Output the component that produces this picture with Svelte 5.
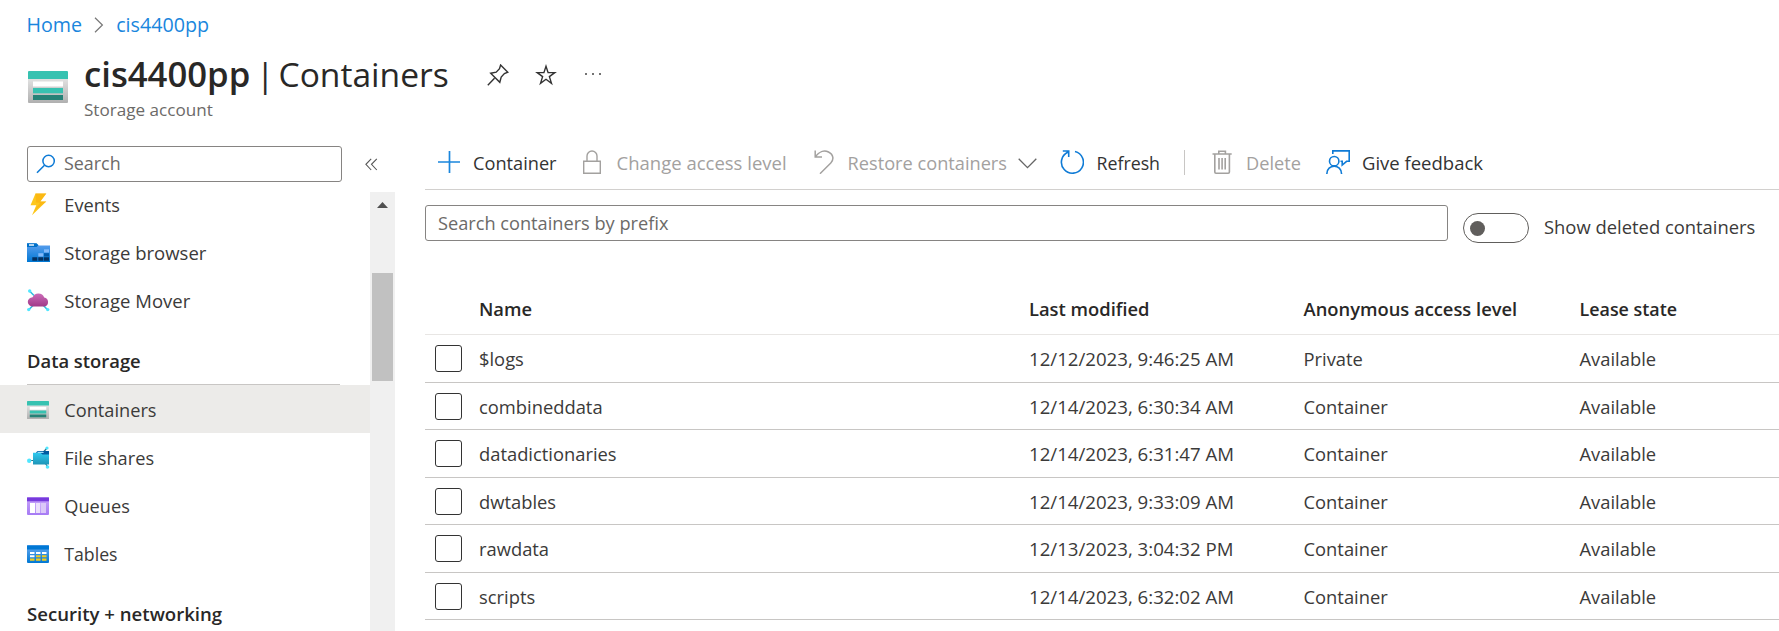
<script>
  const rows = [
    ['$logs', '12/12/2023, 9:46:25 AM', 'Private', 'Available'],
    ['combineddata', '12/14/2023, 6:30:34 AM', 'Container', 'Available'],
    ['datadictionaries', '12/14/2023, 6:31:47 AM', 'Container', 'Available'],
    ['dwtables', '12/14/2023, 9:33:09 AM', 'Container', 'Available'],
    ['rawdata', '12/13/2023, 3:04:32 PM', 'Container', 'Available'],
    ['scripts', '12/14/2023, 6:32:02 AM', 'Container', 'Available']
  ];
  const topItems = ['Events', 'Storage browser', 'Storage Mover'];
  const dataItems = ['Containers', 'File shares', 'Queues', 'Tables'];
</script>

{#snippet storageIcon(w, h)}
  <svg width={w} height={h} viewBox="0 0 40 32" preserveAspectRatio="none">
    <rect y="7" width="40" height="25" rx="1" fill="url(#grey)" />
    <path d="M1 0h38a1 1 0 0 1 1 1v7H0V1a1 1 0 0 1 1-1z" fill="#37c2b1" />
    <rect x="5" y="10.5" width="30" height="5" fill="#fff" />
    <rect x="5" y="17" width="30" height="5.3" fill="#37c2b1" />
    <rect x="5" y="24" width="30" height="5" fill="#258277" />
  </svg>
{/snippet}

{#snippet navIcon(name)}
  {#if name === 'Events'}
    <svg width="23" height="23" viewBox="0 0 23 23">
      <path d="M8.5 .5H19.3L13.3 8.5H19.3L5 22.3L9.3 12.2H3.5z" fill="#fdc71c" />
      <path d="M8.5 .5H19.3L13.3 8.5H19.3L7 18L13 9.8L9 9.5z" fill="#fab010" opacity=".65" />
    </svg>
  {:else if name === 'Storage browser'}
    <svg width="23" height="23" viewBox="0 0 23 23">
      <path d="M0 2.5H9.5L11 4.5H23V21H0z" fill="url(#folder)" />
      <path d="M0 2.3H9.5L11.6 4.2L9.5 6H0z" fill="#0070c8" />
      <rect x="2" y="3.3" width="5" height="1.4" fill="#fff" />
      <rect x="17" y="8.3" width="5" height="3.2" fill="#83b9f9" />
      <rect x="11.3" y="12.2" width="5" height="3.3" fill="#83b9f9" />
      <rect x="17" y="12.2" width="5" height="3.3" fill="#0058a8" />
      <path d="M5.3 16.3h5v3.5h-5zM11.3 16.3h5v3.5h-5zM17 16.3h5v3.5h-5z" fill="#04305f" />
    </svg>
  {:else if name === 'Storage Mover'}
    <svg width="23" height="23" viewBox="0 0 23 23">
      <path d="M2.5 2L7 6.5M1.7 20.8L6 16.5M20.5 20.8L16.5 16.5" stroke="#32bedd" stroke-width="1.6" />
      <circle cx="2.7" cy="2" r="1.7" fill="#50e6ff" />
      <circle cx="1.7" cy="20.6" r="1.7" fill="#50e6ff" />
      <circle cx="20.7" cy="20.6" r="1.7" fill="#50e6ff" />
      <path d="M6 17.6A5 4.7 0 0 1 5.6 8.2A6.2 6 0 0 1 17.2 8.4A4.7 4.7 0 0 1 17.4 17.6z" fill="url(#cloud)" />
    </svg>
  {:else if name === 'Containers'}
    {@render storageIcon(22, 18)}
  {:else if name === 'File shares'}
    <svg width="23" height="23" viewBox="0 0 23 23">
      <path d="M2.5 14.5H7M16.5 6L20 2M18 17L20.5 20.5" stroke="#2a7186" stroke-width="1.2" />
      <path d="M9 6.5L10.5 5H22V9H9z" fill="#005ba1" />
      <path d="M6 6.8H13.5L15.5 8.5H22V18.5H6z" fill="url(#share)" />
      <path d="M10 5.8h6l1 1.2h-6z" fill="#9fdcf5" />
      <circle cx="2.2" cy="14.7" r="2.2" fill="#50e6ff" />
      <circle cx="20" cy="2" r="1.6" fill="#50e6ff" />
      <circle cx="20.5" cy="21" r="1.8" fill="#50e6ff" />
    </svg>
  {:else if name === 'Queues'}
    <svg width="22" height="18" viewBox="0 0 22 18">
      <rect width="22" height="18" rx="1" fill="url(#queue)" />
      <rect y=".5" width="22" height="3.8" fill="#773adc" />
      <rect x="3" y="6" width="5" height="10" fill="#fff" />
      <rect x="8.8" y="6" width="4.5" height="10" fill="#ece0fc" />
      <rect x="14" y="6" width="5" height="10" fill="#dbc8f8" />
    </svg>
  {:else}
    <svg width="22" height="18" viewBox="0 0 22 18">
      <rect width="22" height="18" rx="1" fill="url(#tbl)" />
      <rect y=".5" width="22" height="4" fill="#0078d4" />
      <path d="M3 7h4.5v2H3zM9 7h4.5v2H9zM15 7h4.5v2H15zM3 10.2h4.5v2H3z" fill="#fff" />
      <path d="M9 10.2h4.5v2H9zM15 10.2h4.5v2H15zM3 13.4h4.5v2.4H3zM9 13.4h4.5v2.4H9zM15 13.4h4.5v2.4H15z" fill="#f2cb1d" />
    </svg>
  {/if}
{/snippet}

<svg class="defs" width="0" height="0">
  <defs>
    <linearGradient id="grey" x2="0" y2="1"><stop stop-color="#e3e3e3" /><stop offset="1" stop-color="#b0b0b0" /></linearGradient>
    <linearGradient id="folder" x2="0" y2="1"><stop stop-color="#5ea0ef" /><stop offset="1" stop-color="#0078d4" /></linearGradient>
    <linearGradient id="cloud" x2="0" y2="1"><stop stop-color="#cc6bb8" /><stop offset="1" stop-color="#a03a88" /></linearGradient>
    <linearGradient id="share" x2="0" y2="1"><stop stop-color="#2fc9ef" /><stop offset="1" stop-color="#1e95b8" /></linearGradient>
    <linearGradient id="queue" x2="0" y2="1"><stop stop-color="#c9a8fa" /><stop offset="1" stop-color="#a67af4" /></linearGradient>
    <linearGradient id="tbl" x2="0" y2="1"><stop stop-color="#6aa9f0" /><stop offset="1" stop-color="#0078d4" /></linearGradient>
  </defs>
</svg>

<div class="page">
  <nav class="crumbs">
    <a href="#home">Home</a>
    <svg width="10" height="16" viewBox="0 0 10 16"><path d="M1 .8L8.4 8L1 15.2" fill="none" stroke="#777" stroke-width="1.2" /></svg>
    <a href="#account">cis4400pp</a>
  </nav>

  <header>
    <span class="logo">{@render storageIcon(40, 32)}</span>
    <div class="titles">
      <div class="title-line">
        <h1><b>cis4400pp</b><span class="bar">|</span><span class="blade">Containers</span></h1>
        <svg class="pin" width="22" height="22" viewBox="0 0 22 22" fill="none" stroke="#333" stroke-width="1.4"><path d="M.8 21.2L7.5 14.3M13.6 1L20.8 8.2L17.4 9.6L14.2 13L12.8 18.3L3.7 9.2L9.2 8.2L12.5 4.6z" /></svg>
        <svg class="star" width="22" height="22" viewBox="0 0 22 22" fill="none" stroke="#333" stroke-width="1.4"><path d="M11 2.2L13.1 8.6H19.8L14.4 12.6L16.5 19.4L11 15.3L5.5 19.4L7.6 12.6L2.2 8.6H8.9z" /></svg>
        <svg class="more" width="18" height="4" viewBox="0 0 18 4" fill="#444"><circle cx="2" cy="2" r="1" /><circle cx="9" cy="2" r="1" /><circle cx="16" cy="2" r="1" /></svg>
      </div>
      <div class="subtitle">Storage account</div>
    </div>
  </header>

  <div class="body">
    <aside>
      <div class="search-row">
        <div class="search">
          <svg width="20" height="20" viewBox="0 0 20 20" fill="none" stroke="#0f7bd6" stroke-width="1.5"><circle cx="12.6" cy="7" r="5.7" /><path d="M8.5 11.2L1 18.8" /></svg>
          <span>Search</span>
        </div>
        <svg width="13" height="13" viewBox="0 0 13 13" fill="none" stroke="#555" stroke-width="1.1"><path d="M6.2 .8L.9 6.3L6.2 12M11.8 .8L6.5 6.3L11.8 12" /></svg>
      </div>
      <div class="side">
        <div class="menu">
          {#each topItems as item}
            <div class="item" class:long={item.length > 8}><span class="ico">{@render navIcon(item)}</span><span class="label">{item}</span></div>
          {/each}
          <div class="group"><span>Data storage</span></div>
          {#each dataItems as item}
            <div class="item" class:selected={item === 'Containers'} class:tight={item === 'Tables'}><span class="ico">{@render navIcon(item)}</span><span class="label">{item}</span></div>
          {/each}
          <div class="group last"><span>Security + networking</span></div>
        </div>
        <div class="scroll">
          <svg width="11" height="6" viewBox="0 0 11 6"><path d="M5.5 0L11 6H0z" fill="#505050" /></svg>
          <div class="thumb"></div>
        </div>
      </div>
    </aside>

    <main>
      <div class="toolbar">
        <div class="cmd">
          <svg width="24" height="24" viewBox="0 0 24 24"><path d="M12.5 1v22M1 12h22" stroke="#1a86dd" stroke-width="1.7" /></svg>
          <span>Container</span>
        </div>
        <div class="cmd off access">
          <svg width="24" height="24" viewBox="0 0 24 24" fill="none" stroke="#a3a19f" stroke-width="1.4"><path d="M2.7 11.2H19.3V23.2H2.7zM6 11V6a5 5 0 0 1 10 0V11" /></svg>
          <span class="wide">Change access level</span>
        </div>
        <div class="cmd off">
          <svg width="24" height="24" viewBox="0 0 24 24" fill="none" stroke="#a3a19f" stroke-width="1.5"><path d="M3.2 .5V7H10M3.5 6.5C7 1.8 12 -.2 16.5 2C22 4.8 21.8 10 18.8 13L8 23.7" /></svg>
          <span>Restore containers</span>
          <svg class="chev" width="19" height="11" viewBox="0 0 19 11" fill="none" stroke="#666" stroke-width="1.3"><path d="M.7 .8L9.5 9.7L18.3 .8" /></svg>
        </div>
        <div class="cmd refresh">
          <svg width="24" height="24" viewBox="0 0 24 24" fill="none" stroke="#0f7bd6" stroke-width="1.6"><path d="M15 1.5A11 11 0 1 1 7.8 2.2M2.8 1H8.7V7M8.7 1L4.5 4.6" /></svg>
          <span>Refresh</span>
        </div>
        <i class="sep"></i>
        <div class="cmd off">
          <svg width="24" height="24" viewBox="0 0 24 24" fill="none" stroke="#a3a19f" stroke-width="1.6"><path d="M2.5 4H21.7M8.8 4V1.2H15.4V4M4.8 4V22Q4.8 23.2 6 23.2H18.2Q19.4 23.2 19.4 22V4M9 8v11.5M12.1 8v11.5M15.2 8v11.5" /></svg>
          <span>Delete</span>
        </div>
        <div class="cmd feedback">
          <svg width="24" height="24" viewBox="0 0 24 24" fill="none" stroke="#0f7bd6" stroke-width="1.6"><circle cx="8.2" cy="11.2" r="4.7" /><path d="M.8 24C.8 13.7 15.6 13.7 15.6 24M6.8 4V.9H23.2V11.3H20.6L16.2 15V11.3H14.5" /></svg>
          <span class="wide">Give feedback</span>
        </div>
      </div>

      <div class="filter">
        <div class="prefix">Search containers by prefix</div>
        <div class="toggle"><i></i></div>
        <span>Show deleted containers</span>
      </div>

      <div class="table">
        <div class="row head">
          <span></span><span>Name</span><span>Last modified</span><span>Anonymous access level</span><span class="lease">Lease state</span>
        </div>
        {#each rows as [name, modified, access, lease]}
          <div class="row">
            <i class="box"></i><span>{name}</span><span class="date">{modified}</span><span>{access}</span><span>{lease}</span>
          </div>
        {/each}
      </div>
    </main>
  </div>
</div>

<style>
  :global(body) { background: #fff; overflow: hidden; }
  .page { height: 631px; overflow: hidden; display: flex; flex-direction: column; font: 18.2px/24px "Open Sans", "Noto Sans", sans-serif; color: #3b3a39; white-space: nowrap; }
  .defs { display: block; position: absolute; }
  svg { display: block; flex: none; }
  i { font-style: normal; }

  .crumbs { display: flex; align-items: center; height: 49px; padding-left: 26.5px; font-size: 19.7px; gap: 12px; }
  .crumbs a { color: #1a86dd; text-decoration: none; }

  header { display: flex; height: 81px; padding-left: 27.5px; box-sizing: border-box; }
  .logo { padding-top: 22px; width: 56.5px; }
  .title-line { display: flex; align-items: center; height: 50px; }
  h1 { margin: 0; display: flex; font-size: 33.6px; line-height: 50px; font-weight: 400; color: #292827; width: 402.5px; }
  h1 b { font-weight: 600; font-size: 34.7px; width: 172px; }
  .bar { width: 22.5px; }
  .pin, .star { margin-top: 2px; }
  .star { margin-left: 26px; }
  .more { margin-left: 27px; }
  .subtitle { font-size: 17.1px; line-height: 22px; color: #6c6a68; }

  .body { display: flex; flex: 1; min-height: 0; }
  aside { width: 395px; display: flex; flex-direction: column; }
  .search-row { display: flex; align-items: center; gap: 23px; padding: 16px 0 10px 27px; }
  .search { display: flex; align-items: center; gap: 8px; width: 315px; height: 36px; box-sizing: border-box; border: 1px solid #868482; border-radius: 3px; padding-left: 8px; color: #6c6a68; font-size: 17.9px; }
  .search span { padding-bottom: 2px; }
  .side { flex: 1; min-height: 0; display: flex; overflow: hidden; }
  .menu { width: 370px; margin-top: -12px; }
  .item { display: flex; align-items: center; height: 48px; padding: 1px 0 0 27px; box-sizing: border-box; }
  .item.selected { background: #ecebe9; }
  .item.long { font-size: 18.5px; }
  .item.tight { font-size: 17.7px; }
  .label { padding-top: 1px; }
  .ico { width: 37.3px; display: flex; }
  .group { height: 61px; box-sizing: border-box; margin: 0 30px 0 27px; border-bottom: 1px solid #c8c6c4; padding-top: 25px; font-size: 18.4px; font-weight: 600; color: #292827; }
  .group.last { font-size: 18.6px; }
  .scroll { width: 25px; background: #f0f0f0; display: flex; flex-direction: column; align-items: center; padding-top: 10px; box-sizing: border-box; }
  .thumb { width: 21px; height: 108px; background: #c1c1c1; margin-top: 65px; }

  main { flex: 1; padding-left: 30px; min-width: 0; }
  .toolbar { display: flex; align-items: center; gap: 25px; height: 60px; padding: 5px 0 0 12px; box-sizing: border-box; border-bottom: 1px solid #d2d0ce; }
  .cmd { display: flex; align-items: center; gap: 12px; color: #333; }
  .cmd span { padding-top: 1px; }
  .cmd .wide { font-size: 18.5px; }
  .cmd.off { color: #a3a19f; }
  .cmd.access { margin-left: -1px; }
  .cmd.refresh { font-size: 17.8px; }
  .chev { margin: 3px -1.5px 0 -1px; }
  .sep { width: 1px; height: 25px; background: #c8c6c4; margin: 0 0 0 -1px; }

  .filter { display: flex; height: 77px; padding-top: 15px; align-items: flex-start; }
  .prefix { width: 1023px; height: 36px; box-sizing: border-box; border: 1px solid #868482; border-radius: 3px; padding-left: 12px; line-height: 34px; color: #6c6a68; }
  .toggle { width: 66px; height: 30px; box-sizing: border-box; margin: 8px 15px 0 15px; border: 1px solid #605e5c; border-radius: 15px; display: flex; align-items: center; padding-left: 6px; }
  .toggle i { width: 15px; height: 15px; border-radius: 50%; background: #605e5c; }
  .filter span { padding-top: 10px; font-size: 18.4px; }

  .row { display: grid; grid-template-columns: 54px 550px 274.5px 276px 1fr; height: 47.5px; box-sizing: border-box; border-bottom: 1px solid #c8c6c4; align-items: center; font-size: 18.35px; }
  .row span { padding-top: 1px; }
  .row.head { height: 53.4px; border-color: #e8e6e4; font-weight: 600; color: #292827; }
  .row .date { font-size: 18.65px; }
  .row .lease { font-size: 17.9px; }
  .box { width: 27px; height: 27px; box-sizing: border-box; border: 1px solid #333; border-radius: 3px; margin-left: 10px; }
</style>
